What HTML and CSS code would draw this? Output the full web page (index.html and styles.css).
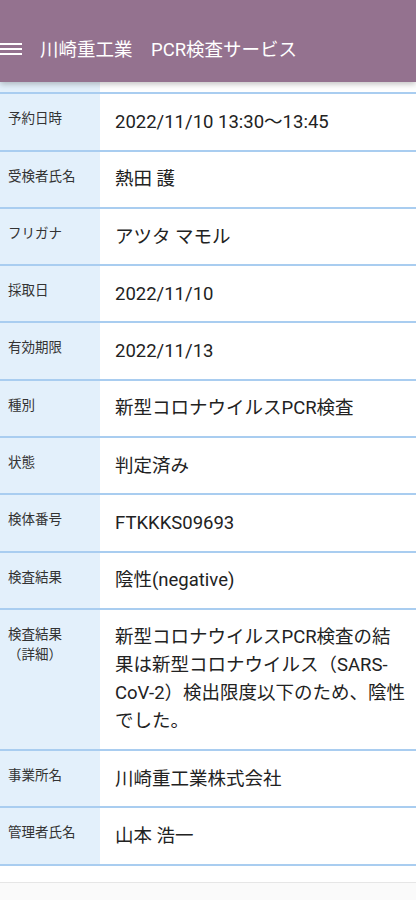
FILE: index.html
```html
<!DOCTYPE html>
<html lang="ja">
<head>
    <meta charset="UTF-8">
    <meta name="viewport" content="width=device-width, initial-scale=1.0">
    <title>川崎重工業 PCR検査サービス</title>
    <link rel="stylesheet" href="styles.css">
</head>
<body>
    <header class="app-bar">
        <svg class="menu-icon" width="22" height="12" viewBox="0 0 22 12">
            <rect x="0" y="0" width="22" height="2" fill="#fff"/>
            <rect x="0" y="5" width="22" height="2" fill="#fff"/>
            <rect x="0" y="10" width="22" height="2" fill="#fff"/>
        </svg>
        <h1 class="app-title">川崎重工業　PCR検査サービス</h1>
    </header>

    <main class="detail">
        <!-- tail of the row scrolled under the app bar -->
        <div class="row row-cut">
            <div class="label"></div>
            <div class="value"></div>
        </div>
        <div class="row">
            <div class="label">予約日時</div>
            <div class="value">2022/11/10 13:30～13:45</div>
        </div>
        <div class="row">
            <div class="label">受検者氏名</div>
            <div class="value">熱田 護</div>
        </div>
        <div class="row">
            <div class="label">フリガナ</div>
            <div class="value">アツタ マモル</div>
        </div>
        <div class="row">
            <div class="label">採取日</div>
            <div class="value">2022/11/10</div>
        </div>
        <div class="row">
            <div class="label">有効期限</div>
            <div class="value">2022/11/13</div>
        </div>
        <div class="row">
            <div class="label">種別</div>
            <div class="value">新型コロナウイルスPCR検査</div>
        </div>
        <div class="row">
            <div class="label">状態</div>
            <div class="value">判定済み</div>
        </div>
        <div class="row">
            <div class="label">検体番号</div>
            <div class="value">FTKKKS09693</div>
        </div>
        <div class="row">
            <div class="label">検査結果</div>
            <div class="value">陰性(negative)</div>
        </div>
        <div class="row">
            <div class="label">検査結果<br>（詳細）</div>
            <div class="value">新型コロナウイルスPCR検査の結果は新型コロナウイルス（SARS-CoV-2）検出限度以下のため、陰性でした。</div>
        </div>
        <div class="row">
            <div class="label">事業所名</div>
            <div class="value">川崎重工業株式会社</div>
        </div>
        <div class="row">
            <div class="label">管理者氏名</div>
            <div class="value">山本 浩一</div>
        </div>
    </main>

    <footer class="page-foot">
        <p>© Kawasaki Heavy Industries, Ltd.</p>
    </footer>
</body>
</html>
```

FILE: styles.css
```css
body {
    margin: 0;
    background: #fff;
    font-family: Roboto, "Noto Sans CJK JP", sans-serif;
    color: #222;
}

.app-bar {
    position: relative;
    z-index: 1;
    display: flex;
    align-items: center;
    height: 82px;
    padding-top: 14px;
    box-sizing: border-box;
    background: #94728f;
    box-shadow: 0 2px 6px rgba(0,0,0,0.25);
}

.menu-icon {
    flex: none;
    margin-top: 2px;
}

.app-title {
    margin: 0 0 0 18px;
    font-size: 18.5px;
    font-weight: normal;
    color: #fff;
    letter-spacing: 0;
}

.row {
    display: flex;
    border-bottom: 2px solid #a9cdf0;
}

.label {
    flex: none;
    width: 100px;
    box-sizing: border-box;
    padding: 14px 4px 14px 8px;
    background: #e3f0fb;
    font-size: 13.5px;
    line-height: 20px;
    color: #333;
}

.value {
    flex: 1;
    min-width: 0;
    padding: 13.65px 10px 13.65px 15px;
    font-size: 18.5px;
    line-height: 28px;
    color: #222;
}

.row-cut .label,
.row-cut .value {
    height: 10.3px;
    padding: 0;
}

.page-foot {
    margin-top: 16px;
    border-top: 1px solid #e6e6e6;
    background: #fafafa;
    padding: 11px 0 20px;
    text-align: center;
}

.page-foot p {
    margin: 0;
    font-size: 17px;
    line-height: 24px;
    color: #333;
}
```
